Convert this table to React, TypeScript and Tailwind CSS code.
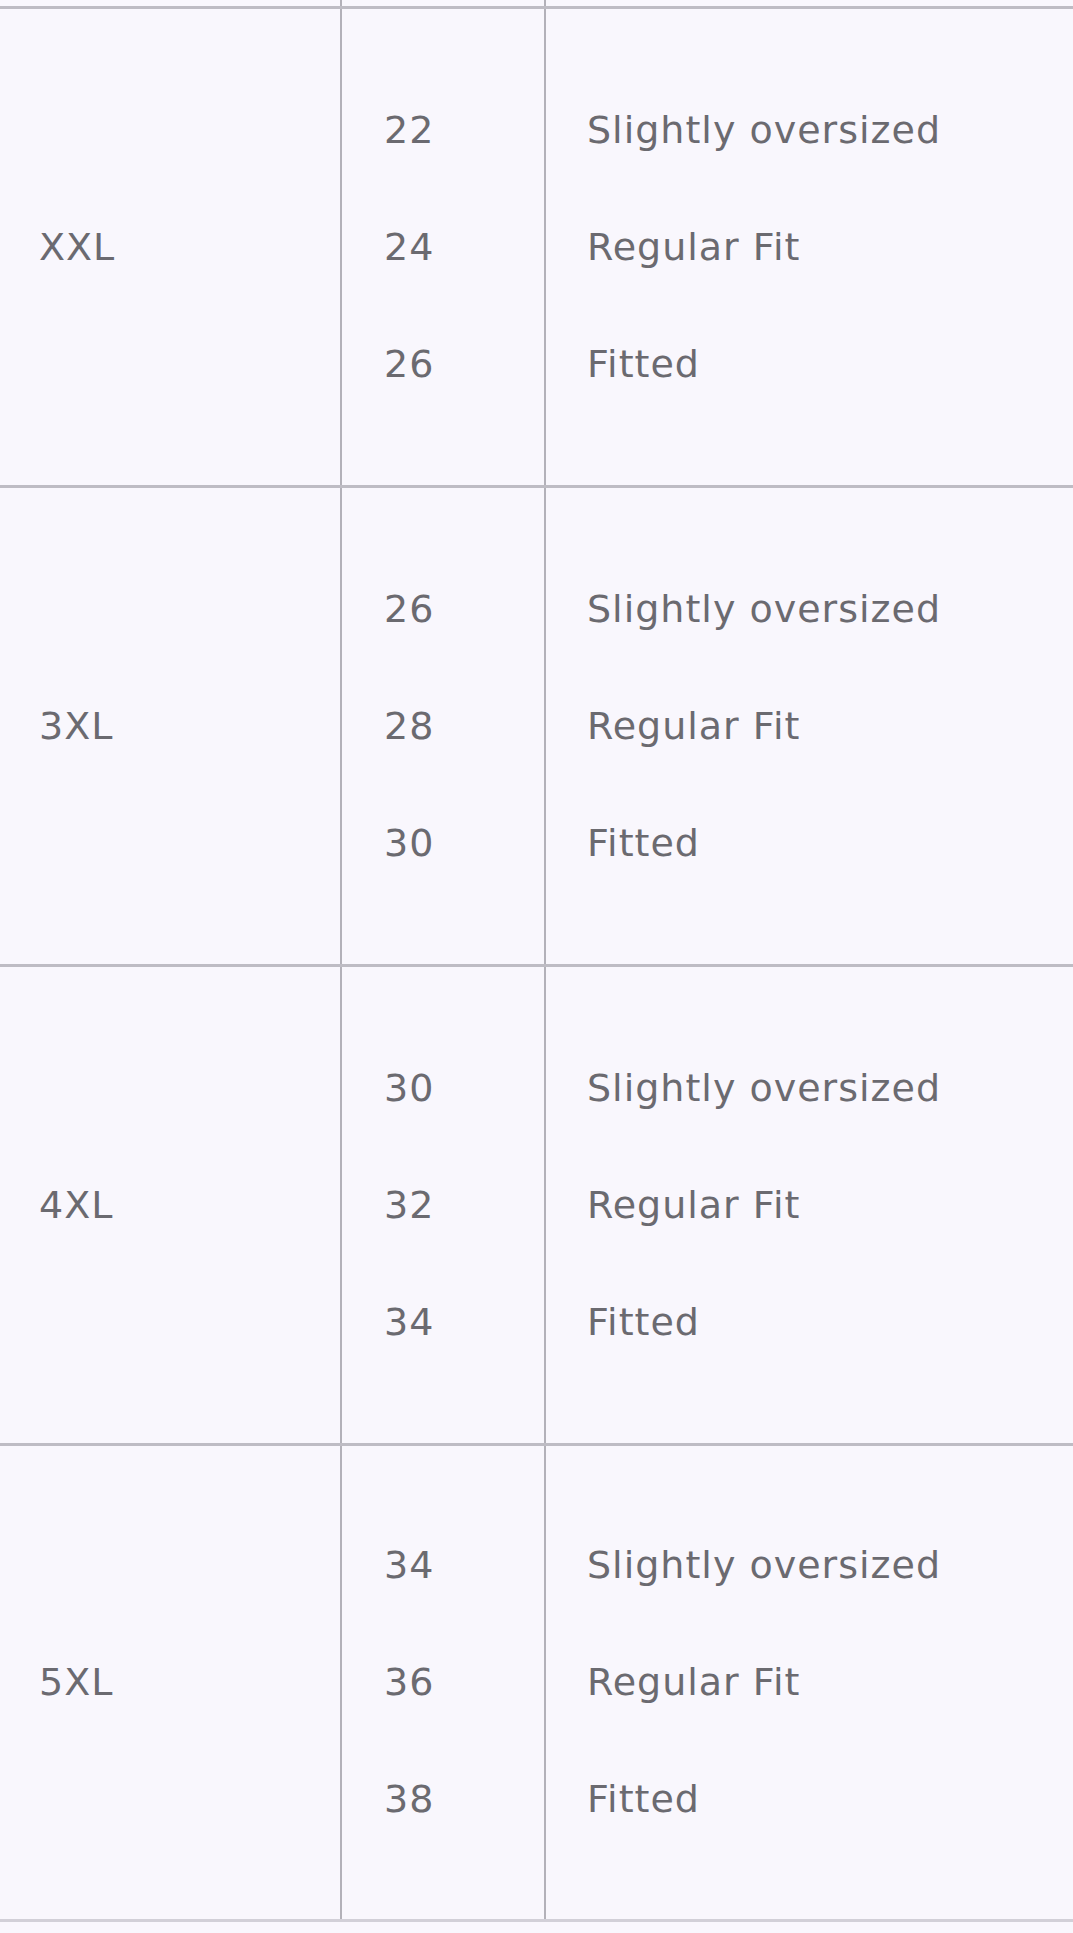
import React from 'react';

const rows = [
  { size: 'XXL', chest: ['22', '24', '26'] },
  { size: '3XL', chest: ['26', '28', '30'] },
  { size: '4XL', chest: ['30', '32', '34'] },
  { size: '5XL', chest: ['34', '36', '38'] },
];

const fits = ['Slightly oversized', 'Regular Fit', 'Fitted'];

export default function App() {
  return (
    <div
      className="min-h-[1933px] w-full bg-[#f9f7fd] text-[38px] tracking-[1px] text-[#6b6a70]"
      style={{ fontFamily: '"DejaVu Sans", "Open Sans", sans-serif' }}
    >
      {/* tail of the row above */}
      <div className="grid h-[6px] grid-cols-[342px_204px_1fr]">
        <div className="border-r-2 border-[#b3b1b9]" />
        <div className="border-r-2 border-[#b3b1b9]" />
        <div />
      </div>

      {rows.map((row, i) => (
        <div
          key={row.size}
          className={`grid h-[479px] grid-cols-[342px_204px_1fr] border-t-[3px] border-[#bebcc4] ${
            i === rows.length - 1 ? 'border-b-[3px] border-b-[#d2d0d8]' : ''
          }`}
        >
          <div className="flex items-center border-r-2 border-[#b3b1b9] pl-[39px]">
            {row.size}
          </div>
          <div className="flex flex-col justify-center border-r-2 border-[#b3b1b9] pl-[42px]">
            {row.chest.map((c) => (
              <div key={c} className="flex h-[117px] items-center">
                {c}
              </div>
            ))}
          </div>
          <div className="flex flex-col justify-center pl-[41px]">
            {fits.map((f) => (
              <div key={f} className="flex h-[117px] items-center">
                {f}
              </div>
            ))}
          </div>
        </div>
      ))}
    </div>
  );
}
